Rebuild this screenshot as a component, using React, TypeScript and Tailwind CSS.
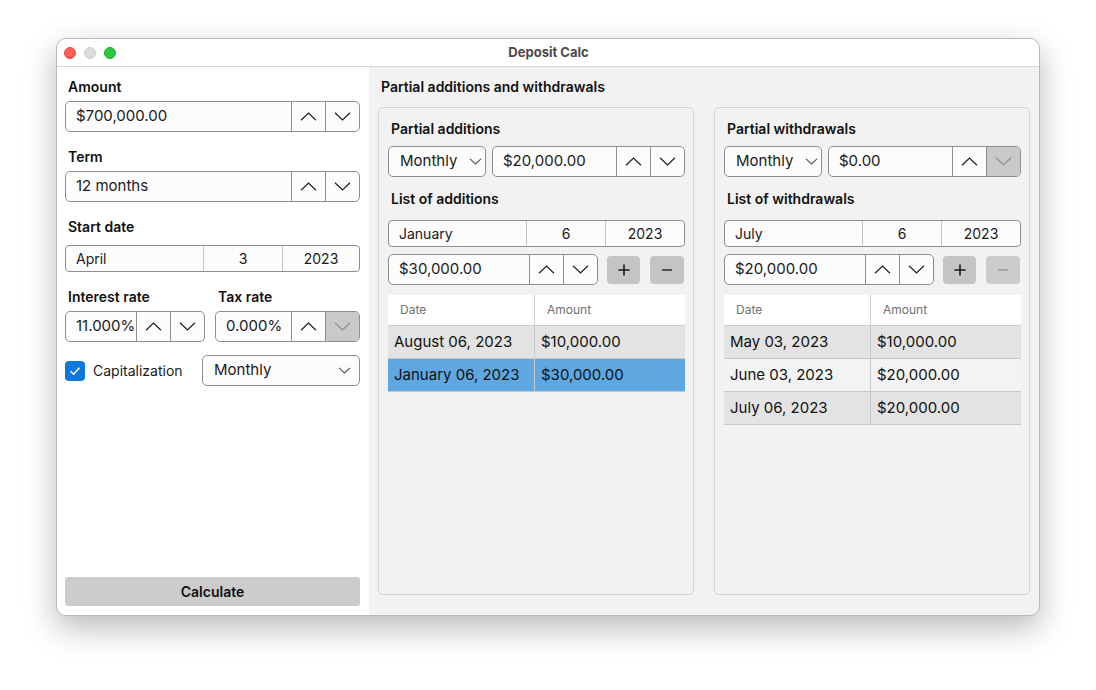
import React from "react";

function ChevronUp({ color = "#1f1f1f" }: { color?: string }) {
  return (
    <svg width="17" height="9" viewBox="0 0 17 9" fill="none">
      <path d="M1 8.2 L8.5 1 L16 8.2" stroke={color} strokeWidth="1.2" />
    </svg>
  );
}

function ChevronDown({ color = "#1f1f1f" }: { color?: string }) {
  return (
    <svg width="17" height="9" viewBox="0 0 17 9" fill="none">
      <path d="M1 0.8 L8.5 8 L16 0.8" stroke={color} strokeWidth="1.2" />
    </svg>
  );
}

function SmallChevron() {
  return (
    <svg width="13" height="7" viewBox="0 0 13 7" fill="none">
      <path d="M1 0.8 L6.5 6 L12 0.8" stroke="#555" strokeWidth="1.1" />
    </svg>
  );
}

function SpinBox({
  value,
  className,
  downDisabled,
}: {
  value: string;
  className: string;
  downDisabled?: boolean;
}) {
  return (
    <div className={`flex h-[31px] border border-[#8e8e8e] rounded-[5px] bg-[#fcfcfc] overflow-hidden ${className}`}>
      <div className="flex-1 flex items-center pl-[10px] text-[15px] text-[#1a1a1a] whitespace-nowrap overflow-hidden">{value}</div>
      <div className="w-[34px] flex items-center justify-center border-l border-[#8e8e8e]">
        <ChevronUp />
      </div>
      <div
        className={`w-[34px] flex items-center justify-center border-l border-[#8e8e8e] ${
          downDisabled ? "bg-[#c9c9c9]" : ""
        }`}
      >
        <ChevronDown color={downDisabled ? "#8f8f8f" : "#1f1f1f"} />
      </div>
    </div>
  );
}

function DateField({ month, day, year }: { month: string; day: string; year: string }) {
  return (
    <div className="flex h-[27px] border border-[#8e8e8e] rounded-[4px] bg-[#fcfcfc] text-[14px] text-[#1a1a1a]">
      <div className="w-[138px] flex items-center pl-[10px] border-r border-[#c4c4c4]">{month}</div>
      <div className="w-[79px] flex items-center justify-center border-r border-[#c4c4c4]">{day}</div>
      <div className="flex-1 flex items-center justify-center">{year}</div>
    </div>
  );
}

function Dropdown({ className, gap }: { className: string; gap?: boolean }) {
  return (
    <div
      className={`flex items-center h-[31px] border border-[#8e8e8e] rounded-[5px] bg-[#fcfcfc] pl-[11px] text-[15px] text-[#1a1a1a] ${
        gap ? "gap-[12px]" : "justify-between pr-[6px]"
      } ${className}`}
    >
      <span>Monthly</span>
      <SmallChevron />
    </div>
  );
}

type Row = { date: string; amount: string; bg: string };

function Table({ rows }: { rows: Row[] }) {
  return (
    <div className="flex flex-col">
      <div className="flex h-[31px] bg-white text-[12px] text-[#707070] border-b border-[#cdcdcd]">
        <div className="w-[147px] flex items-center pl-[12px] border-r border-[#cdcdcd]">Date</div>
        <div className="flex-1 flex items-center pl-[12px]">Amount</div>
      </div>
      {rows.map((r) => (
        <div key={r.date} className={`flex h-[33px] text-[15px] text-[#111] border-b border-[#c8c8c8] ${r.bg}`}>
          <div className="w-[147px] flex items-center pl-[6px] border-r border-[#c8c8c8]">{r.date}</div>
          <div className="flex-1 flex items-center pl-[6px]">{r.amount}</div>
        </div>
      ))}
    </div>
  );
}

function Group({
  title,
  listTitle,
  value,
  valueDownDisabled,
  month,
  amount,
  minusDisabled,
  rows,
}: {
  title: string;
  listTitle: string;
  value: string;
  valueDownDisabled?: boolean;
  month: string;
  amount: string;
  minusDisabled?: boolean;
  rows: Row[];
}) {
  return (
    <div className="w-[316px] h-[488px] border border-[#d3d3d3] rounded-[5px] pt-[11px] pl-[9px] pr-[8px]">
      <div className="text-[14px] font-semibold text-[#111] leading-[20px] pl-[3px]">{title}</div>
      <div className="flex gap-[6px] mt-[7px]">
        <Dropdown className="w-[98px]" gap />
        <SpinBox value={value} className="flex-1" downDisabled={valueDownDisabled} />
      </div>
      <div className="text-[14px] font-semibold text-[#111] leading-[20px] pl-[3px] mt-[12px]">{listTitle}</div>
      <div className="mt-[11px]">
        <DateField month={month} day="6" year="2023" />
      </div>
      <div className="flex items-center mt-[7px]">
        <SpinBox value={amount} className="w-[210px]" />
        <div className="w-[33px] h-[28px] ml-[9px] rounded-[4px] bg-[#c4c4c4] flex items-center justify-center text-[#1a1a1a]">
          <svg width="12" height="12" viewBox="0 0 12 12">
            <path d="M6 0.5 V11.5 M0.5 6 H11.5" stroke="#1a1a1a" strokeWidth="1.6" />
          </svg>
        </div>
        <div
          className={`w-[34px] h-[28px] ml-[10px] rounded-[4px] flex items-center justify-center ${
            minusDisabled ? "bg-[#cbcbcb]" : "bg-[#c4c4c4]"
          }`}
        >
          <svg width="12" height="12" viewBox="0 0 12 12">
            <path d="M1 6 H11" stroke={minusDisabled ? "#9a9a9a" : "#333"} strokeWidth="1.6" />
          </svg>
        </div>
      </div>
      <div className="mt-[10px]">
        <Table rows={rows} />
      </div>
    </div>
  );
}

export default function App() {
  return (
    <div
      className="w-[1096px] h-[690px] bg-white pt-[38px] pl-[56px]"
      style={{ fontFamily: "Inter, 'Noto Sans', sans-serif" }}
    >
      <div className="w-[984px] h-[578px] rounded-[10px] overflow-hidden border border-[#b8b8b8] shadow-[0_12px_32px_rgba(0,0,0,0.28)] flex flex-col bg-[#f2f2f2]">
        <div className="h-[28px] bg-white border-b border-[#d6d6d6] flex items-center relative shrink-0">
          <div className="flex gap-[8px] pl-[7px]">
            <div className="w-[12px] h-[12px] rounded-full bg-[#fe5f57] border border-[#e2483f]" />
            <div className="w-[12px] h-[12px] rounded-full bg-[#dcdcdc] border border-[#cfcfcf]" />
            <div className="w-[12px] h-[12px] rounded-full bg-[#28c840] border border-[#1fa92f]" />
          </div>
          <div className="flex-1 text-center text-[13px] font-bold text-[#4b4b4b] pr-[58px]">Deposit Calc</div>
        </div>
        <div className="flex flex-1">
          <div className="w-[313px] bg-white flex flex-col pt-[10px] pl-[8px] pr-[9px] pb-[9px]">
            <div className="text-[14px] font-semibold text-[#111] leading-[20px] pl-[3px]">Amount</div>
            <SpinBox value="$700,000.00" className="mt-[4px]" />
            <div className="text-[14px] font-semibold text-[#111] leading-[20px] pl-[3px] mt-[15px]">Term</div>
            <SpinBox value="12 months" className="mt-[4px]" />
            <div className="text-[14px] font-semibold text-[#111] leading-[20px] pl-[3px] mt-[15px]">Start date</div>
            <div className="mt-[8px]">
              <DateField month="April" day="3" year="2023" />
            </div>
            <div className="flex gap-[10px] mt-[15px]">
              <div className="w-[140px] flex flex-col">
                <div className="text-[14px] font-semibold text-[#111] leading-[20px] pl-[3px]">Interest rate</div>
                <SpinBox value="11.000%" className="mt-[4px]" />
              </div>
              <div className="flex-1 flex flex-col">
                <div className="text-[14px] font-semibold text-[#111] leading-[20px] pl-[3px]">Tax rate</div>
                <SpinBox value="0.000%" className="mt-[4px]" downDisabled />
              </div>
            </div>
            <div className="flex items-center mt-[13px]">
              <div className="w-[20px] h-[20px] rounded-[4px] bg-[#0b78dc] flex items-center justify-center">
                <svg width="12" height="10" viewBox="0 0 12 10" fill="none">
                  <path d="M1.5 5.2 L4.6 8.2 L10.5 1.8" stroke="white" strokeWidth="1.5" />
                </svg>
              </div>
              <span className="ml-[8px] text-[14px] text-[#1a1a1a]">Capitalization</span>
              <Dropdown className="w-[158px] ml-auto pr-[8px]" />
            </div>
            <div className="flex-1" />
            <div className="h-[29px] rounded-[3px] bg-[#cccccc] flex items-center justify-center text-[14px] font-semibold text-[#111]">
              Calculate
            </div>
          </div>
          <div className="flex-1 flex flex-col pt-[10px] pl-[9px] pr-[9px]">
            <div className="text-[14px] font-semibold text-[#111] leading-[20px] pl-[3px]">
              Partial additions and withdrawals
            </div>
            <div className="flex gap-[20px] mt-[10px]">
              <Group
                title="Partial additions"
                listTitle="List of additions"
                value="$20,000.00"
                month="January"
                amount="$30,000.00"
                rows={[
                  { date: "August 06, 2023", amount: "$10,000.00", bg: "bg-[#e3e3e3]" },
                  { date: "January 06, 2023", amount: "$30,000.00", bg: "bg-[#5fa7e1]" },
                ]}
              />
              <Group
                title="Partial withdrawals"
                listTitle="List of withdrawals"
                value="$0.00"
                valueDownDisabled
                month="July"
                amount="$20,000.00"
                minusDisabled
                rows={[
                  { date: "May 03, 2023", amount: "$10,000.00", bg: "bg-[#e3e3e3]" },
                  { date: "June 03, 2023", amount: "$20,000.00", bg: "bg-[#f3f3f3]" },
                  { date: "July 06, 2023", amount: "$20,000.00", bg: "bg-[#e3e3e3]" },
                ]}
              />
            </div>
          </div>
        </div>
      </div>
    </div>
  );
}
